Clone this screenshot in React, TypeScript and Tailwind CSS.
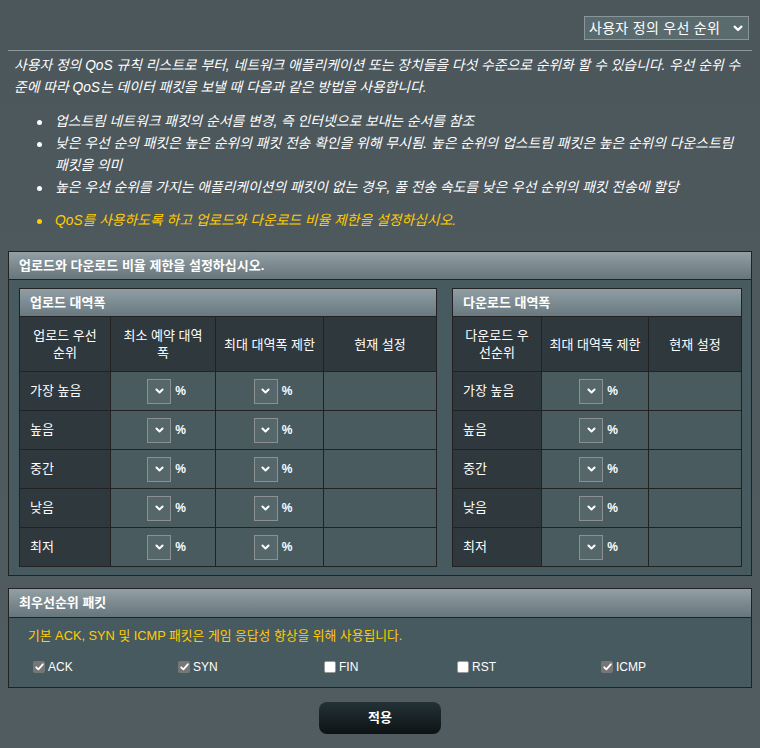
import React from "react";

const levels = ["가장 높음", "높음", "중간", "낮음", "최저"];

function Chevron({ size = 10 }: { size?: number }) {
  return (
    <svg width={size} height={size * 0.7} viewBox="0 0 10 7" fill="none" stroke="white" strokeWidth="2.2" strokeLinecap="round" strokeLinejoin="round">
      <path d="M1.6 1.6 5 5 8.4 1.6" />
    </svg>
  );
}

function PctSelect() {
  return (
    <div className="flex h-full items-center justify-center gap-[4px] pl-[7px]">
      <div className="flex h-[25px] w-[24px] items-center justify-center border border-[#8c9092] bg-[#56676c]">
        <Chevron size={9} />
      </div>
      <span className="text-[12px] font-bold">%</span>
    </div>
  );
}

function Checkbox({ checked, label, width }: { checked: boolean; label: string; width: string }) {
  return (
    <div className={`flex items-center gap-[3px] ${width}`}>
      {checked ? (
        <span className="flex h-[12px] w-[12px] items-center justify-center rounded-[2px] bg-[#767676]">
          <svg width="9" height="8" viewBox="0 0 9 8" fill="none" stroke="white" strokeWidth="1.8" strokeLinecap="round" strokeLinejoin="round">
            <path d="M1.2 4.3 3.4 6.4 7.8 1.3" />
          </svg>
        </span>
      ) : (
        <span className="h-[12px] w-[12px] rounded-[2px] border border-[#9a9a9a] bg-white" />
      )}
      <span className="text-[12px]">{label}</span>
    </div>
  );
}

function BandTable({ title, width, cols, heads, selects }: { title: string; width: string; cols: string; heads: React.ReactNode[]; selects: number }) {
  return (
    <div className={`${width} border border-[#222]`}>
      <div className="flex h-[28px] items-center border-b border-[#222] bg-gradient-to-b from-[#909ea4] to-[#6a7980] px-[10px] text-[13px] font-bold">
        {title}
      </div>
      <div className={`grid ${cols} gap-px bg-[#222]`}>
        {heads.map((h, i) => (
          <div key={i} className="flex h-[54px] items-center justify-center bg-[#2e383d] text-center text-[13px] leading-[17px]">
            {h}
          </div>
        ))}
        {levels.map((lv) => (
          <React.Fragment key={lv}>
            <div className="flex h-[38px] items-center bg-[#2e383d] pl-[10px] text-[13px]">{lv}</div>
            {Array.from({ length: selects }).map((_, i) => (
              <div key={i} className="h-[38px] bg-[#4a5b60]">
                <PctSelect />
              </div>
            ))}
            <div className="h-[38px] bg-[#4a5b60]" />
          </React.Fragment>
        ))}
      </div>
    </div>
  );
}

export default function App() {
  return (
    <div className="min-h-[748px] w-[760px] bg-gradient-to-b from-[#4c575c] to-[#515c60] pb-[13px] font-['Liberation_Sans','Noto_Sans_CJK_KR',sans-serif] text-white">
      <div className="flex justify-end pr-[11px] pt-[16px]">
        <div className="flex h-[24px] w-[165px] items-center justify-between border border-[#8a9598] bg-[#5a6b70] pl-[4px] pr-[5px] text-[14px] tracking-[0.3px]">
          <span>사용자 정의 우선 순위</span>
          <Chevron size={10} />
        </div>
      </div>
      <div className="mx-[8px] mt-[10px] h-px bg-[#8c979b]" />

      <div className="mt-[4px] px-[14px] text-[13.8px] italic leading-[22px]">
        <p className="whitespace-nowrap">
          사용자 정의 QoS 규칙 리스트로 부터, 네트워크 애플리케이션 또는 장치들을 다섯 수준으로 순위화 할 수 있습니다. 우선 순위 수
        </p>
        <p className="whitespace-nowrap">준에 따라 QoS는 데이터 패킷을 보낼 때 다음과 같은 방법을 사용합니다.</p>
        <ul className="mt-[12px] ml-[23px]">
          <li className="flex">
            <span className="flex h-[22px] w-[18px] shrink-0 items-center"><span className="h-[5px] w-[5px] rounded-full bg-white" /></span>
            <span>업스트림 네트워크 패킷의 순서를 변경, 즉 인터넷으로 보내는 순서를 참조</span>
          </li>
          <li className="flex">
            <span className="flex h-[22px] w-[18px] shrink-0 items-center"><span className="h-[5px] w-[5px] rounded-full bg-white" /></span>
            <span>
              <span className="block whitespace-nowrap">낮은 우선 순의 패킷은 높은 순위의 패킷 전송 확인을 위해 무시됨. 높은 순위의 업스트림 패킷은 높은 순위의 다운스트림</span>
              <span className="block">패킷을 의미</span>
            </span>
          </li>
          <li className="flex">
            <span className="flex h-[22px] w-[18px] shrink-0 items-center"><span className="h-[5px] w-[5px] rounded-full bg-white" /></span>
            <span>높은 우선 순위를 가지는 애플리케이션의 패킷이 없는 경우, 풀 전송 속도를 낮은 우선 순위의 패킷 전송에 할당</span>
          </li>
          <li className="mt-[11px] flex text-[#ffcc00]">
            <span className="flex h-[22px] w-[18px] shrink-0 items-center"><span className="h-[5px] w-[5px] rounded-full bg-[#ffcc00]" /></span>
            <span>QoS를 사용하도록 하고 업로드와 다운로드 비율 제한을 설정하십시오.</span>
          </li>
        </ul>
      </div>

      <div className="ml-[8px] mt-[19px] w-[744px] border border-[#222] bg-[#475a60]">
        <div className="flex h-[28px] items-center border-b border-[#222] bg-gradient-to-b from-[#929fa5] to-[#67767c] px-[10px] text-[13px] font-bold">
          업로드와 다운로드 비율 제한을 설정하십시오.
        </div>
        <div className="flex gap-[15px] px-[10px] py-[8px]">
          <BandTable
            title="업로드 대역폭"
            width="w-[418px]"
            cols="grid-cols-[90px_104px_107px_112px]"
            selects={2}
            heads={[
              <>업로드 우선<br />순위</>,
              <>최소 예약 대역<br />폭</>,
              "최대 대역폭 제한",
              "현재 설정",
            ]}
          />
          <BandTable
            title="다운로드 대역폭"
            width="w-[290px]"
            cols="grid-cols-[88px_106px_92px]"
            selects={1}
            heads={[<>다운로드 우<br />선순위</>, "최대 대역폭 제한", "현재 설정"]}
          />
        </div>
      </div>

      <div className="ml-[8px] mt-[12px] w-[744px] border border-[#222] bg-[#475a60]">
        <div className="flex h-[29px] items-center border-b border-[#222] bg-gradient-to-b from-[#929fa5] to-[#67767c] px-[10px] text-[13px] font-bold">
          최우선순위 패킷
        </div>
        <div className="px-[19px] pb-[9px] pt-[8px]">
          <p className="text-[12.8px] leading-[20px] text-[#ffcc00]">기본 ACK, SYN 및 ICMP 패킷은 게임 응답성 향상을 위해 사용됩니다.</p>
          <div className="ml-[5px] mt-[10px] flex h-[22px] items-center">
            <Checkbox checked label="ACK" width="w-[145px]" />
            <Checkbox checked label="SYN" width="w-[146px]" />
            <Checkbox checked={false} label="FIN" width="w-[133px]" />
            <Checkbox checked={false} label="RST" width="w-[144px]" />
            <Checkbox checked label="ICMP" width="w-[100px]" />
          </div>
        </div>
      </div>

      <div className="mt-[14px] flex justify-center">
        <button className="h-[32px] w-[122px] rounded-[8px] bg-gradient-to-b from-[#233237] to-[#0e1315] text-[13px] font-bold text-white">
          적용
        </button>
      </div>
    </div>
  );
}
